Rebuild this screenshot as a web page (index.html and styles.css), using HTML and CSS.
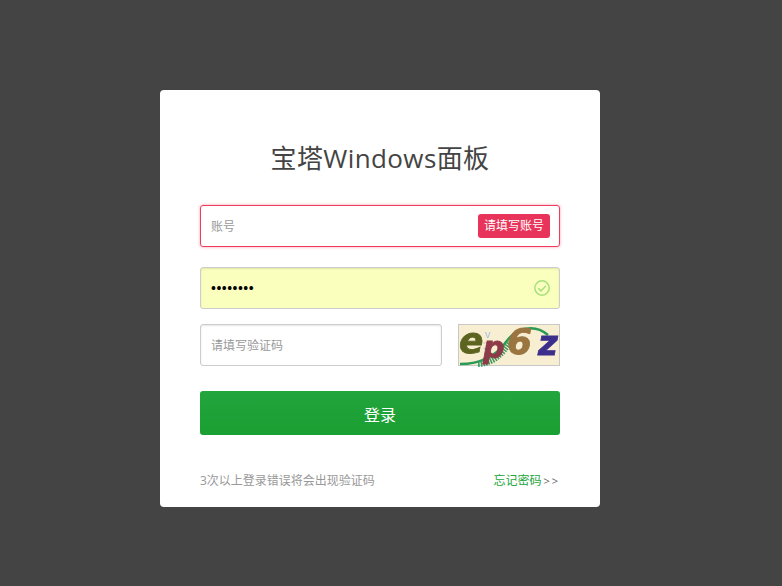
FILE: index.html
```html
<!DOCTYPE html>
<html lang="zh-CN">
<head>
    <meta charset="UTF-8">
    <meta name="viewport" content="width=device-width, initial-scale=1.0">
    <title>宝塔Windows面板</title>
    <link rel="stylesheet" href="styles.css">
</head>
<body>
    <div class="login-box">
        <h1 class="login-title">宝塔Windows面板</h1>

        <div class="field field-error">
            <span class="placeholder">账号</span>
            <span class="error-tip">请填写账号</span>
        </div>

        <div class="field field-filled">
            <span class="dots">&bull;&bull;&bull;&bull;&bull;&bull;&bull;&bull;</span>
            <svg class="check" width="18" height="18" viewBox="0 0 18 18">
                <circle cx="9" cy="9" r="7.2" fill="none" stroke="#a5e07c" stroke-width="1.5"/>
                <path d="M5.2 9.2l2.8 2.7 4.8-5" fill="none" stroke="#a5e07c" stroke-width="1.5"/>
            </svg>
        </div>

        <div class="captcha-row">
            <div class="field field-code">
                <span class="placeholder">请填写验证码</span>
            </div>
            <svg class="captcha" width="102" height="42" viewBox="0 0 102 42">
                <rect x="0.5" y="0.5" width="101" height="41" fill="#f8eed2" stroke="#c8c8c8"/>
                <text x="27" y="14" class="noise">v</text>
                <text x="25" y="26" class="noise noise-grey">3</text>
                <path d="M2 40C22 40 38 32 48 18C58 4 76 -1 90 11" fill="none" stroke="#2a9a55" stroke-width="2.5"/>
                <path d="M20 40C36 39 44 30 52 18" fill="none" stroke="#3d9a60" stroke-width="6" stroke-dasharray="1.5 1"/>
                <text x="1" y="29" class="glyph glyph-e">e</text>
                <text x="25" y="34" class="glyph glyph-p">p</text>
                <text x="49" y="30" class="glyph glyph-6">6</text>
                <text x="80" y="31" class="glyph glyph-z">z</text>
            </svg>
        </div>

        <button class="login-btn">登录</button>

        <div class="login-foot">
            <span class="foot-tip">3次以上登录错误将会出现验证码</span>
            <span class="foot-link"><span class="foot-green">忘记密码</span><span class="foot-arrows">&gt;&gt;</span></span>
        </div>
    </div>
</body>
</html>
```
FILE: styles.css
```css
html, body {
    margin: 0;
    height: 100%;
}
body {
    box-sizing: border-box;
    padding: 90px 0 0 160px;
    background-color: #444;
    font-family: "Open Sans", "Noto Sans CJK SC", sans-serif;
    overflow: hidden;
}
.login-box {
    box-sizing: border-box;
    width: 440px;
    height: 417px;
    padding: 0 40px;
    background-color: #fff;
    border-radius: 4px;
}
.login-title {
    margin: 0;
    padding-top: 48px;
    height: 115px;
    box-sizing: border-box;
    font-size: 26px;
    font-weight: 400;
    letter-spacing: 0.4px;
    line-height: 40px;
    text-align: center;
    color: #444;
}
.field {
    box-sizing: border-box;
    display: flex;
    align-items: center;
    justify-content: space-between;
    height: 42px;
    padding: 0 9px 0 10px;
    border: 1px solid #ccc;
    border-radius: 3px;
    box-shadow: inset 0 1px 2px rgba(0,0,0,0.1);
    margin-bottom: 20px;
}
.placeholder {
    font-size: 12px;
    color: #999;
}
.field-error {
    border-color: #ef3b5c;
    box-shadow: 0 0 3px rgba(239,59,92,0.5);
}
.error-tip {
    padding: 0 6px;
    line-height: 24px;
    font-size: 12px;
    color: #fff;
    background-color: #e8345a;
    border-radius: 3px;
}
.field-filled {
    background-color: #faffbd;
    margin-bottom: 15px;
    padding-right: 8px;
}
.dots {
    font-size: 13px;
    font-weight: 700;
    letter-spacing: 0.5px;
    color: #000;
}
.captcha-row {
    display: flex;
    justify-content: space-between;
    margin-bottom: 25px;
}
.field-code {
    width: 242px;
    margin-bottom: 0;
}
.captcha {
    display: block;
    overflow: visible;
    filter: blur(0.4px);
}
.noise {
    font-family: "Liberation Sans", sans-serif;
    font-size: 11px;
    fill: #a9bfe0;
}
.noise-grey {
    fill: #c4c4c4;
}
.glyph {
    font-family: "DejaVu Sans", sans-serif;
    font-size: 36px;
    font-weight: 700;
    font-style: italic;
    stroke-width: 0.8px;
}
.glyph-e { fill: #5c6420; stroke: #5c6420; }
.glyph-p { fill: #8e3a48; stroke: #8e3a48; font-size: 30px; }
.glyph-6 { fill: #9a7540; stroke: #9a7540; }
.glyph-z { fill: #3c2f8c; stroke: #3c2f8c; font-size: 34px; }
.login-btn {
    display: block;
    width: 100%;
    height: 44px;
    padding: 1px 0 0;
    border: none;
    border-radius: 3px;
    background: linear-gradient(#22a53d, #1a9f32);
    color: #fff;
    font-family: inherit;
    font-size: 16px;
}
.login-foot {
    display: flex;
    justify-content: space-between;
    align-items: center;
    margin-top: 37px;
    line-height: 18px;
    font-size: 12px;
    color: #999;
}
.foot-green {
    color: #20a53a;
}
.foot-arrows {
    font-size: 11px;
    color: #666;
    letter-spacing: 2px;
    margin-left: 2px;
}
```
